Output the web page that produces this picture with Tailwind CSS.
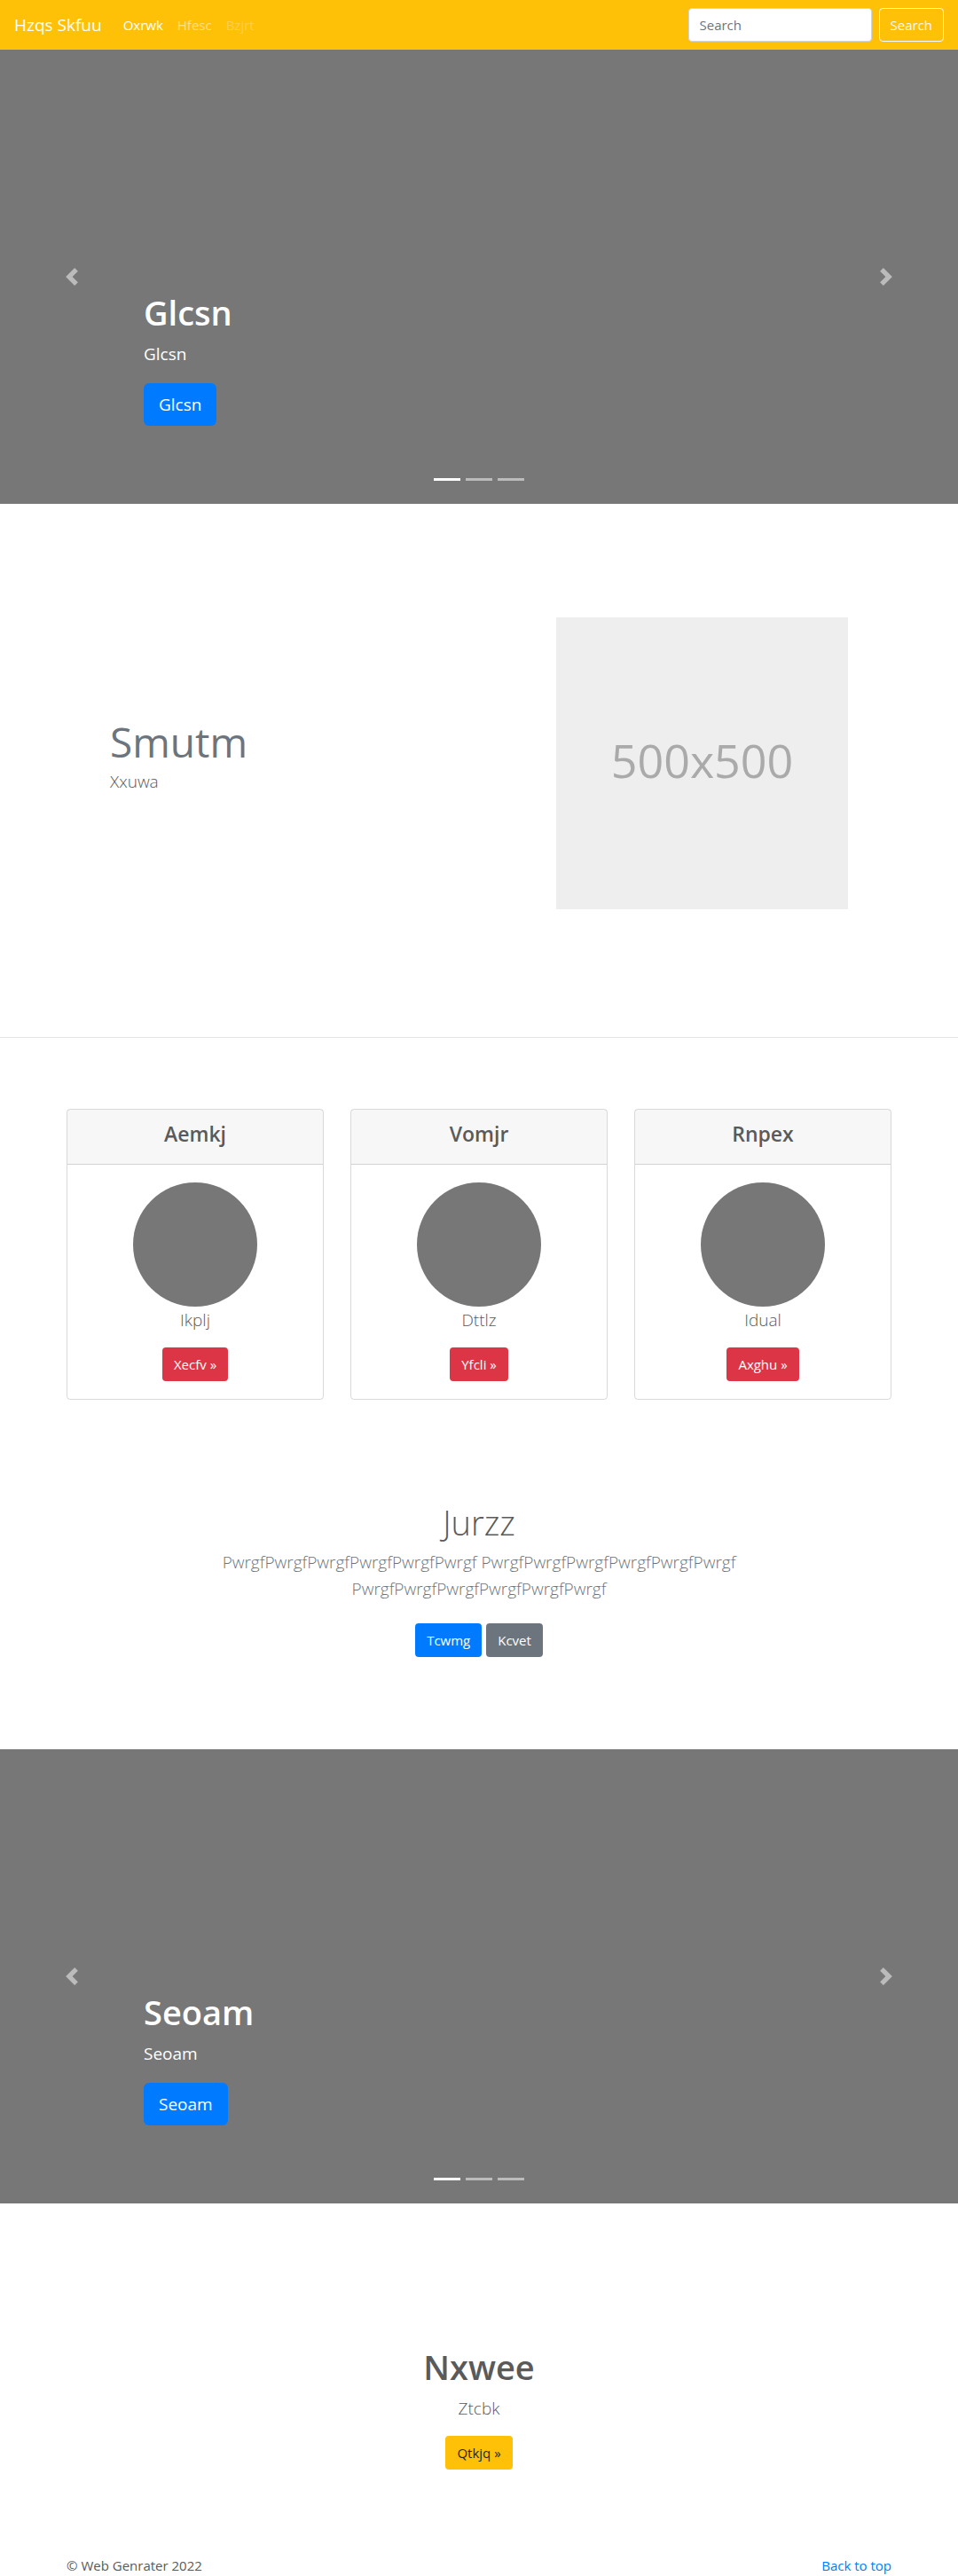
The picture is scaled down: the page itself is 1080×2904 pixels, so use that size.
<!DOCTYPE html>
<html lang="en">
<head>
<meta charset="utf-8">
<meta name="viewport" content="width=device-width, initial-scale=1">
<title>Hzqs Skfuu</title>
<script src="https://cdn.jsdelivr.net/npm/@tailwindcss/browser@4"></script>
</head>
<body class="bg-white font-['Open_Sans','Noto_Sans',sans-serif] text-[15px] leading-6 text-[#5a5a5a]">

<header>
  <nav class="flex h-14 items-center bg-[#ffc107] px-4 text-white">
    <a href="#" class="mr-6 text-[19px] leading-[30px]">Hzqs Skfuu</a>
    <ul class="flex gap-4">
      <li><a href="#">Oxrwk</a></li>
      <li><a href="#" class="text-white/50">Hfesc</a></li>
      <li><a href="#" class="text-white/25">Bzjrt</a></li>
    </ul>
    <form class="ml-auto flex gap-2">
      <input type="search" placeholder="Search" aria-label="Search" class="h-[38px] w-[207px] rounded border border-[#ced4da] bg-white px-3 text-[#495057] placeholder:text-[#6c757d]">
      <button type="button" class="h-[38px] rounded border border-[#f8f9fa] px-3 text-[#f8f9fa]">Search</button>
    </form>
  </nav>
</header>

<main>
  <section class="relative flex h-[512px] flex-col justify-end bg-[#777] px-[15%] pb-[88px] text-white">
    <h1 class="mb-2 text-[38px] leading-[48px] font-semibold">Glcsn</h1>
    <p class="mb-[18px] text-[19px] leading-[30px]">Glcsn</p>
    <a href="#" class="self-start rounded-md bg-[#007bff] px-[17px] py-[9px] text-[19px] leading-[30px]">Glcsn</a>
    <button type="button" aria-label="Previous" class="absolute inset-y-0 left-0 flex w-[15%] items-center justify-center opacity-50">
      <svg class="size-5" viewBox="0 0 8 8" fill="#fff"><path d="M5.25 0l-4 4 4 4 1.5-1.5-2.5-2.5 2.5-2.5-1.5-1.5z"/></svg>
    </button>
    <button type="button" aria-label="Next" class="absolute inset-y-0 right-0 flex w-[15%] items-center justify-center opacity-50">
      <svg class="size-5" viewBox="0 0 8 8" fill="#fff"><path d="M2.75 0l-1.5 1.5 2.5 2.5-2.5 2.5 1.5 1.5 4-4-4-4z"/></svg>
    </button>
    <ol class="absolute inset-x-0 bottom-[26px] flex justify-center gap-1.5">
      <li class="h-[3px] w-[30px] bg-white"></li>
      <li class="h-[3px] w-[30px] bg-white/50"></li>
      <li class="h-[3px] w-[30px] bg-white/50"></li>
    </ol>
  </section>

  <section class="mx-auto flex max-w-[960px] items-center justify-between px-16 pt-32 pb-36">
    <div class="pb-5">
      <h2 class="text-[46px] leading-[60px] text-[#6c757d]">Smutm</h2>
      <p class="text-[19px] leading-[30px] font-light">Xxuwa</p>
    </div>
    <div role="img" aria-label="500x500" class="flex aspect-square w-[329px] items-center justify-center bg-[#eee] pb-2 text-[52px] leading-none text-[#aaa]">500x500</div>
  </section>

  <hr class="border-t border-black/10">

  <section class="mx-auto grid max-w-[960px] grid-cols-3 gap-[30px] px-[15px] pt-20 text-center">
    <article class="rounded border border-black/15">
      <h2 class="border-b border-black/15 bg-black/3 pt-[13px] pb-[19px] text-[23px] leading-[29px] font-semibold">Aemkj</h2>
      <div class="flex flex-col items-center p-5">
        <div class="size-[140px] rounded-full bg-[#777]"></div>
        <p class="mb-4 text-[19px] leading-[30px] font-light">Ikplj</p>
        <a href="#" class="rounded bg-[#dc3545] px-[13px] py-[7px] text-white">Xecfv »</a>
      </div>
    </article>
    <article class="rounded border border-black/15">
      <h2 class="border-b border-black/15 bg-black/3 pt-[13px] pb-[19px] text-[23px] leading-[29px] font-semibold">Vomjr</h2>
      <div class="flex flex-col items-center p-5">
        <div class="size-[140px] rounded-full bg-[#777]"></div>
        <p class="mb-4 text-[19px] leading-[30px] font-light">Dttlz</p>
        <a href="#" class="rounded bg-[#dc3545] px-[13px] py-[7px] text-white">Yfcli »</a>
      </div>
    </article>
    <article class="rounded border border-black/15">
      <h2 class="border-b border-black/15 bg-black/3 pt-[13px] pb-[19px] text-[23px] leading-[29px] font-semibold">Rnpex</h2>
      <div class="flex flex-col items-center p-5">
        <div class="size-[140px] rounded-full bg-[#777]"></div>
        <p class="mb-4 text-[19px] leading-[30px] font-light">Idual</p>
        <a href="#" class="rounded bg-[#dc3545] px-[13px] py-[7px] text-white">Axghu »</a>
      </div>
    </article>
  </section>

  <section class="mx-auto max-w-[640px] px-5 pt-[114px] pb-[104px] text-center">
    <h2 class="mb-1.5 text-[38px] leading-[48px] font-light">Jurzz</h2>
    <p class="mb-4 text-[19px] leading-[30px] font-light text-[#6c757d]">PwrgfPwrgfPwrgfPwrgfPwrgfPwrgf PwrgfPwrgfPwrgfPwrgfPwrgfPwrgf PwrgfPwrgfPwrgfPwrgfPwrgfPwrgf</p>
    <div class="flex justify-center gap-[5px] pt-2 text-white">
      <a href="#" class="rounded bg-[#007bff] px-[13px] py-[7px]">Tcwmg</a>
      <a href="#" class="rounded bg-[#6c757d] px-[13px] py-[7px]">Kcvet</a>
    </div>
  </section>

  <section class="relative flex h-[512px] flex-col justify-end bg-[#777] px-[15%] pb-[88px] text-white">
    <h1 class="mb-2 text-[38px] leading-[48px] font-semibold">Seoam</h1>
    <p class="mb-[18px] text-[19px] leading-[30px]">Seoam</p>
    <a href="#" class="self-start rounded-md bg-[#007bff] px-[17px] py-[9px] text-[19px] leading-[30px]">Seoam</a>
    <button type="button" aria-label="Previous" class="absolute inset-y-0 left-0 flex w-[15%] items-center justify-center opacity-50">
      <svg class="size-5" viewBox="0 0 8 8" fill="#fff"><path d="M5.25 0l-4 4 4 4 1.5-1.5-2.5-2.5 2.5-2.5-1.5-1.5z"/></svg>
    </button>
    <button type="button" aria-label="Next" class="absolute inset-y-0 right-0 flex w-[15%] items-center justify-center opacity-50">
      <svg class="size-5" viewBox="0 0 8 8" fill="#fff"><path d="M2.75 0l-1.5 1.5 2.5 2.5-2.5 2.5 1.5 1.5 4-4-4-4z"/></svg>
    </button>
    <ol class="absolute inset-x-0 bottom-[26px] flex justify-center gap-1.5">
      <li class="h-[3px] w-[30px] bg-white"></li>
      <li class="h-[3px] w-[30px] bg-white/50"></li>
      <li class="h-[3px] w-[30px] bg-white/50"></li>
    </ol>
  </section>

  <section class="flex flex-col items-center px-4 pt-40 pb-24 text-center">
    <h2 class="mb-2 text-[38px] leading-[48px] font-semibold">Nxwee</h2>
    <p class="mb-4 text-[19px] leading-[30px] font-light">Ztcbk</p>
    <a href="#" class="rounded bg-[#ffc107] px-[13px] py-[7px] text-[#212529]">Qtkjq »</a>
  </section>
</main>

<footer class="mx-auto flex max-w-[960px] justify-between px-[15px]">
  <p>© Web Genrater 2022</p>
  <a href="#" class="text-[#007bff]">Back to top</a>
</footer>

</body>
</html>
